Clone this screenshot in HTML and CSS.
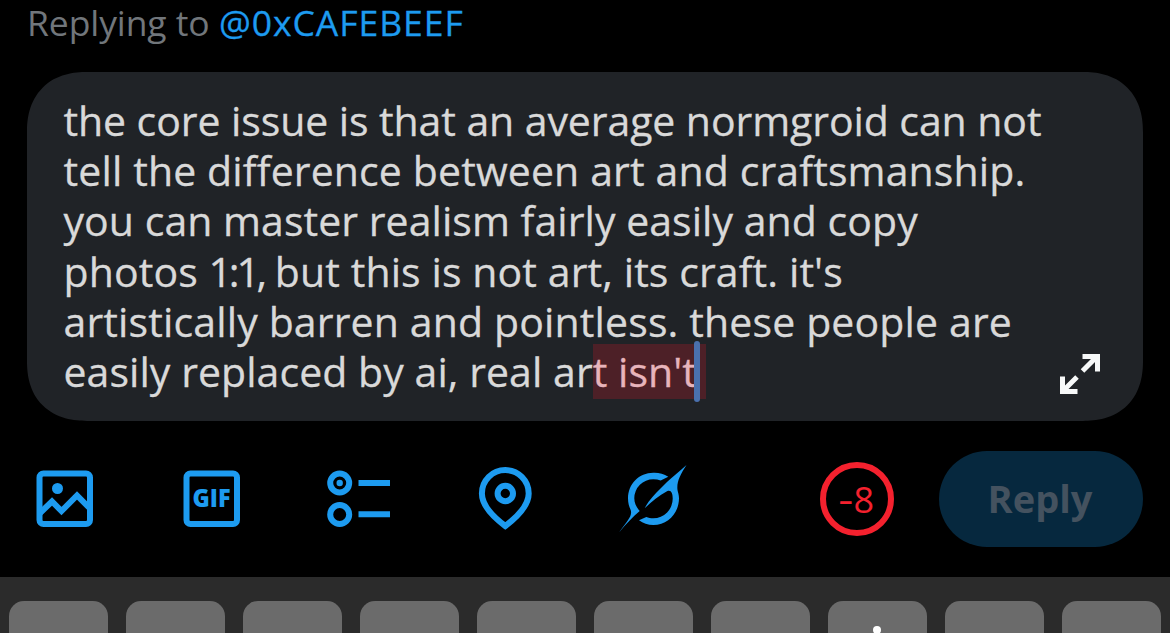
FILE: index.html
```html
<!DOCTYPE html>
<html lang="en">
<head>
<meta charset="utf-8">
<title>Reply</title>
<link rel="stylesheet" href="styles.css">
</head>
<body>
<main class="screen">
  <header class="replying"><span class="to">Replying to</span><span class="handle">@0xCAFEBEEF</span></header>
  <section class="composer">
    <div class="draft">
      <div class="l1">the core issue is that an average normgroid can not</div>
      <div class="l2">tell the difference between art and craftsmanship.</div>
      <div class="l3">you can master realism fairly easily and copy</div>
      <div class="l4">photos <span class="ratio">1:1,</span> but this is not art, its craft. it's</div>
      <div class="l5">artistically barren and pointless. these people are</div>
      <div class="l6">easily replaced by ai, real ar<span class="over">t isn't<i class="caret"></i></span></div>
    </div>
    <svg class="expand" width="42" height="42" viewBox="0 0 42 42" fill="none" stroke="#f7f9f9" stroke-width="5"><path d="M23.500 18 37 4.500M23.500 3.500H38.500V18.500M18 24 4 38M3.500 23.500V38.500H18.500"/></svg>
  </section>
  <nav class="tools">
    <svg width="58" height="58" viewBox="0 0 58 58" fill="none" stroke="#1d9bf0" stroke-width="6"><rect x="3.500" y="3.500" width="50.500" height="50.500" rx="4"/><path d="M4 43 16 31.500 25.500 41 41 25.500 54 38.500"/><circle cx="21.500" cy="18.500" r="5.500" fill="#1d9bf0" stroke="none"/></svg>
    <svg class="gif" width="58" height="58" viewBox="0 0 58 58"><rect x="3.500" y="3.500" width="50.500" height="50.500" rx="4" fill="none" stroke="#1d9bf0" stroke-width="6"/><text x="9.500" y="37" textLength="38" lengthAdjust="spacingAndGlyphs">GIF</text></svg>
    <svg width="64" height="58" viewBox="0 0 64 58" fill="none" stroke="#1d9bf0" stroke-width="6"><circle cx="12.700" cy="13" r="9.500"/><circle cx="12.700" cy="13" r="3.200" fill="#1d9bf0" stroke="none"/><circle cx="12.700" cy="44.500" r="9.500"/><path d="M31.500 13H63M31.500 44.200H63"/></svg>
    <svg width="54" height="64" viewBox="0 0 54 64" fill="none" stroke="#1d9bf0" stroke-width="6"><path d="M27.300 59C16 50.500 3.900 39.500 3.900 26.500a23.400 23.400 0 0 1 46.800 0C50.700 39.500 38.500 50.500 27.300 59Z"/><circle cx="27.300" cy="26.500" r="7.700"/></svg>
    <svg width="68" height="68" viewBox="0 0 68 68" fill="#1d9bf0"><path d="M49.300 11.700A26 26 0 0 0 34.300 7.700C20 7.700 9 19 9 33.300C9 38 10 41.500 11.700 45C13.500 51 9 55 0 67.500C7 59 14 51.500 20.700 46C17.500 42.500 15.300 38 15.300 33.300A19 19 0 0 1 34.300 14.300C37 14.300 39.500 14.700 41.700 15.400ZM67.500 0C60 7 54 11.500 48 17L40 25C33 32 29 37 25.700 43.300C33 36 40 31 48 26.300C52 24.500 53.700 28 53.700 33.500A19.500 19.500 0 0 1 34.300 53.300C31.500 53.300 29.500 53 27.300 52L20 55.300C24 58.300 29 60 34.300 60C49 60 60 48 60 33.300C60 30 59 27.500 58.500 25C57.500 17 61 10 67.500 0Z"/></svg>
    <div class="count"><span class="minus">-</span><span>8</span></div>
    <button class="send"><span>Reply</span></button>
  </nav>
  <div class="keyboard">
    <b></b><b></b><b></b><b></b><b></b><b></b><b></b><b class="dotted"></b><b></b><b></b>
  </div>
</main>
</body>
</html>
```
FILE: styles.css
```css
* { box-sizing: border-box; }
body { margin: 0; background: #000; font-family: "Open Sans", sans-serif; }
.screen { width: 1170px; height: 633px; overflow: hidden; display: flex; flex-direction: column; }
.replying { flex: none; height: 72px; padding-left: 27px; font-size: 35.500px; line-height: 44px; color: #71767b; white-space: pre; display: flex; }
.to { width: 192px; letter-spacing: -0.1px; }
.handle { color: #1d9bf0; letter-spacing: 0.950px; -webkit-text-stroke: 0.3px currentColor; }
.composer { flex: none; position: relative; width: 1116px; height: 349px; margin-left: 27px; padding: 23px 0 0 36.500px; background: #202327; border-radius: 60px; corner-shape: superellipse(1.2); }
.draft { font-size: 41px; line-height: 50.200px; color: #d9d9d9; -webkit-text-stroke: 0.3px currentColor; }
.draft div { height: 50.200px; white-space: pre; }
.l1 { letter-spacing: -0.080px; }
.l2 { letter-spacing: 0.130px; }
.l3 { letter-spacing: 0.050px; }
.l4 { letter-spacing: 0.100px; }
.ratio { letter-spacing: -3.200px; }
.l5 { letter-spacing: 0.140px; }
.l6 { letter-spacing: 0.060px; }
.over { position: relative; display: inline-block; height: 55px; line-height: 55px; margin: -3px 0; padding-right: 9px; background: #4d2027; color: #e7b4bb; }
.caret { position: absolute; right: 6px; top: -3px; width: 6px; height: 61px; border-radius: 3px; background: #4a70ae; }
.expand { position: absolute; left: 1032px; top: 281px; }
.tools { flex: none; height: 156px; display: flex; align-items: center; padding-left: 36px; }
.tools svg { flex: none; }
.gif text { font: 800 24px "Open Sans", sans-serif; fill: #1d9bf0; }
.tools svg:nth-child(2) { margin-left: 89px; }
.tools svg:nth-child(3) { margin-left: 86px; }
.tools svg:nth-child(4) { margin-left: 87px; }
.tools svg:nth-child(5) { margin-left: 87px; }
.count { flex: none; width: 74px; height: 74px; margin-left: 133px; border: 6px solid #f4212e; border-radius: 50%; color: #f4212e; font-size: 36px; line-height: 63px; display: flex; justify-content: center; }
.minus { transform: scaleX(1.3); margin-right: 2px; }
.send { flex: none; width: 204px; height: 96px; margin-left: 45px; padding: 0 2px 2px 0; border: 0; border-radius: 48px; background: #06283e; color: #44525f; font: 700 38px "Open Sans", sans-serif; }
.keyboard { flex: none; height: 56px; padding: 24px 0 0 9px; display: flex; gap: 18px; background: #2b2b2b; }
.keyboard b { flex: none; width: 99px; height: 60px; border-radius: 15px; background: #6b6b6b; }
.dotted::before { content: ""; display: block; width: 8px; height: 8px; margin: 25px 0 0 45px; border-radius: 50%; background: #fff; }
```
